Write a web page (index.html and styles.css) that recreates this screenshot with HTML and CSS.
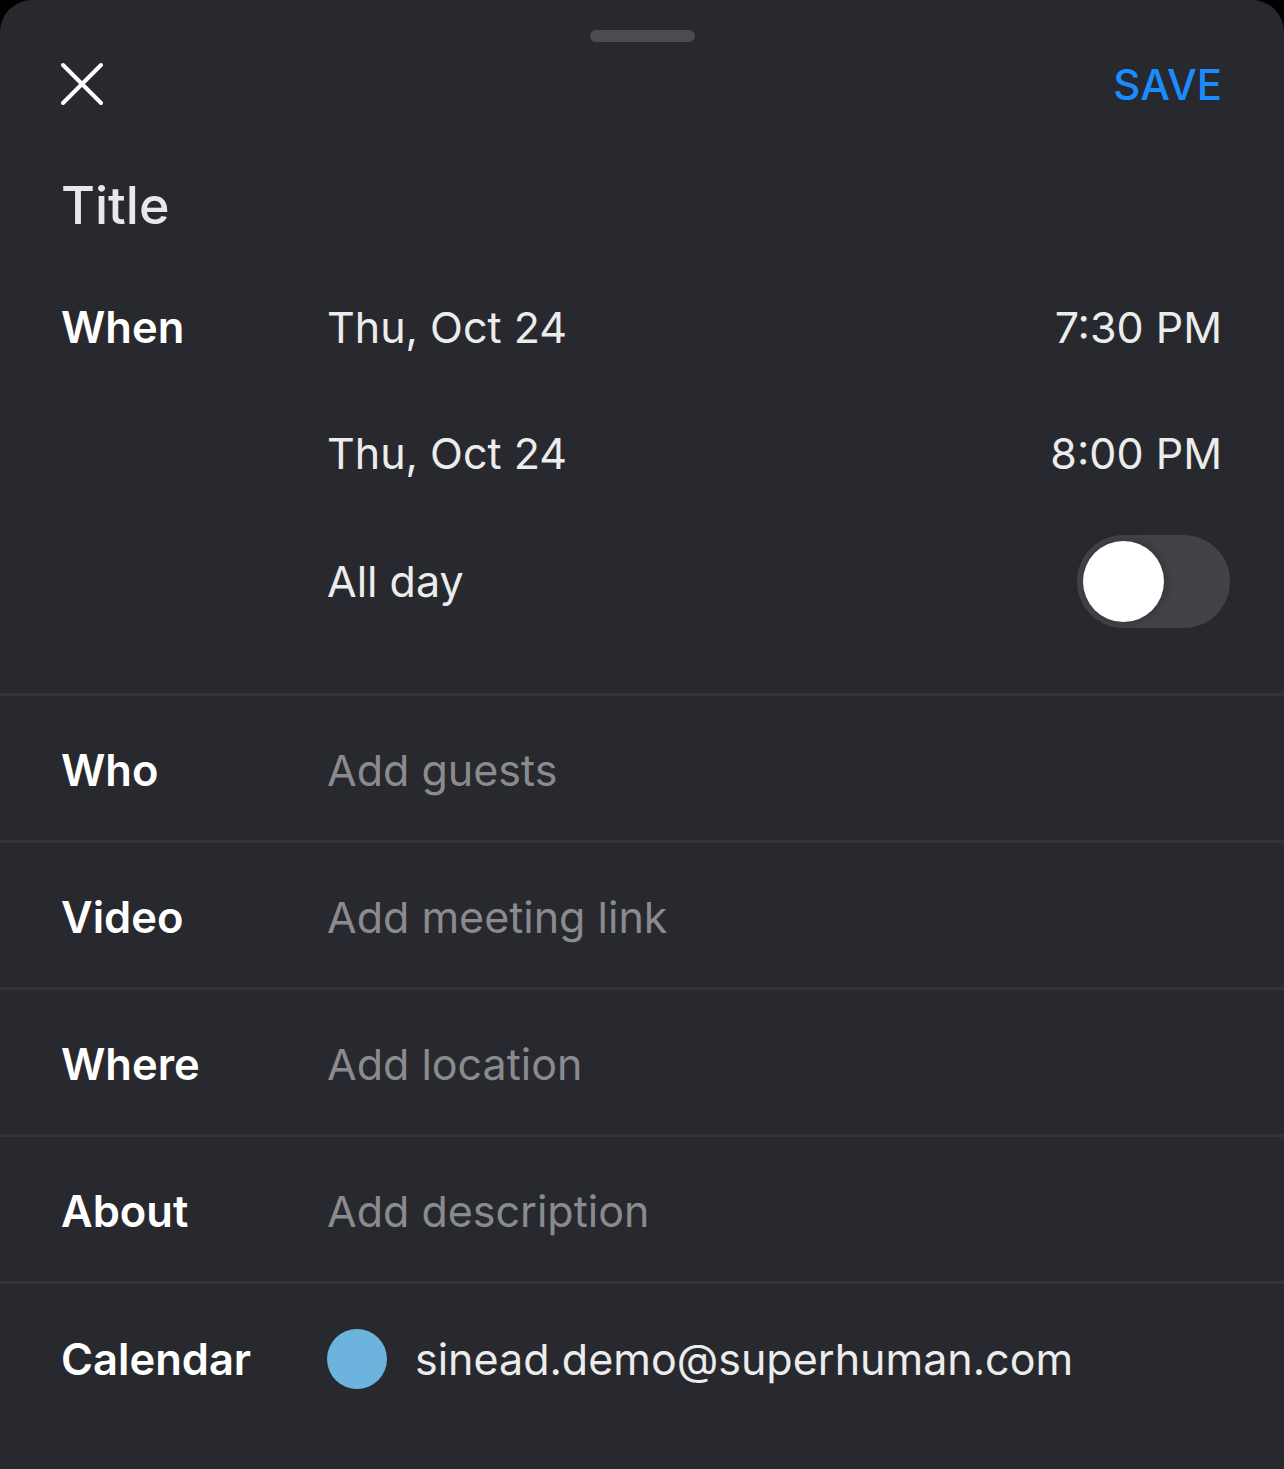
FILE: index.html
```html
<!DOCTYPE html>
<html>
<head>
<meta charset="utf-8">
<link rel="stylesheet" href="styles.css">
</head>
<body>
<div class="sheet">
  <div class="handle"></div>
  <div class="header">
    <svg class="close" width="44" height="44" viewBox="0 0 44 44"><path d="M3 3 L41 41 M41 3 L3 41" stroke="#ffffff" stroke-width="4" stroke-linecap="round" fill="none"/></svg>
    <span class="save">SAVE</span>
  </div>
  <div class="title">Title</div>
  <div class="when">
    <div class="when-row r1">
      <span class="label">When</span>
      <span class="value">Thu, Oct 24</span>
      <span class="time">7:30 PM</span>
    </div>
    <div class="when-row r2">
      <span class="label"></span>
      <span class="value">Thu, Oct 24</span>
      <span class="time">8:00 PM</span>
    </div>
    <div class="when-row r3">
      <span class="label"></span>
      <span class="value">All day</span>
      <span class="toggle"><span class="knob"></span></span>
    </div>
  </div>
  <div class="row"><span class="label">Who</span><span class="placeholder">Add guests</span></div>
  <div class="row"><span class="label">Video</span><span class="placeholder">Add meeting link</span></div>
  <div class="row"><span class="label">Where</span><span class="placeholder">Add location</span></div>
  <div class="row"><span class="label">About</span><span class="placeholder">Add description</span></div>
  <div class="row cal"><span class="label">Calendar</span><span class="dot"></span><span class="value email">sinead.demo@superhuman.com</span></div>
</div>
</body>
</html>
```
FILE: styles.css
```css
html, body {
  margin: 0;
  padding: 0;
  background: #000;
  height: 1469px;
  overflow: hidden;
}
body {
  font-family: Inter, "Noto Sans", sans-serif;
}
.sheet {
  width: 1284px;
  height: 1469px;
  background: #28292e;
  border-radius: 32px 32px 0 0;
  padding-top: 30px;
  box-sizing: border-box;
}
.handle {
  width: 105px;
  height: 12px;
  border-radius: 6px;
  background: #4b4c51;
  margin: 0 auto;
}
.header {
  height: 84px;
  display: flex;
  align-items: center;
  justify-content: space-between;
  padding: 0 62px 0 60px;
}
.close {
  display: block;
}
.save {
  color: #1a8cff;
  font-size: 42px;
  font-weight: 500;
}
.title {
  padding: 52px 61px 30px;
  font-size: 52px;
  line-height: 56px;
  font-weight: 500;
  color: #e8e8e9;
}
.when {
  padding-bottom: 47px;
  border-bottom: 3px solid #333439;
}
.when-row {
  display: flex;
  align-items: center;
  padding: 0 62px 0 61px;
  height: 126px;
}
.when-row.r3 {
  height: 130px;
  padding-right: 54px;
}
.label {
  width: 266px;
  flex: none;
  font-size: 43.5px;
  font-weight: 600;
  color: #ffffff;
}
.value {
  flex: 1;
  font-size: 43px;
  color: #ececec;
}
.time {
  font-size: 43px;
  color: #ececec;
}
.toggle {
  width: 153px;
  height: 93px;
  border-radius: 47px;
  background: #424348;
  display: flex;
  align-items: center;
  padding-left: 6px;
  box-sizing: border-box;
}
.knob {
  width: 81px;
  height: 81px;
  border-radius: 50%;
  background: #fff;
  box-shadow: 2px 0 10px rgba(0,0,0,0.25);
}
.row {
  display: flex;
  align-items: center;
  height: 144px;
  padding: 4px 62px 0 61px;
  box-sizing: border-box;
  height: 147px;
  border-bottom: 3px solid #333439;
}
.row.cal {
  border-bottom: none;
  height: 150px;
  padding-top: 0;
}
.placeholder {
  font-size: 43px;
  color: #8a8b8f;
}
.dot {
  width: 60px;
  height: 60px;
  border-radius: 50%;
  background: #6cb4dd;
  flex: none;
  margin-right: 28px;
}
```
